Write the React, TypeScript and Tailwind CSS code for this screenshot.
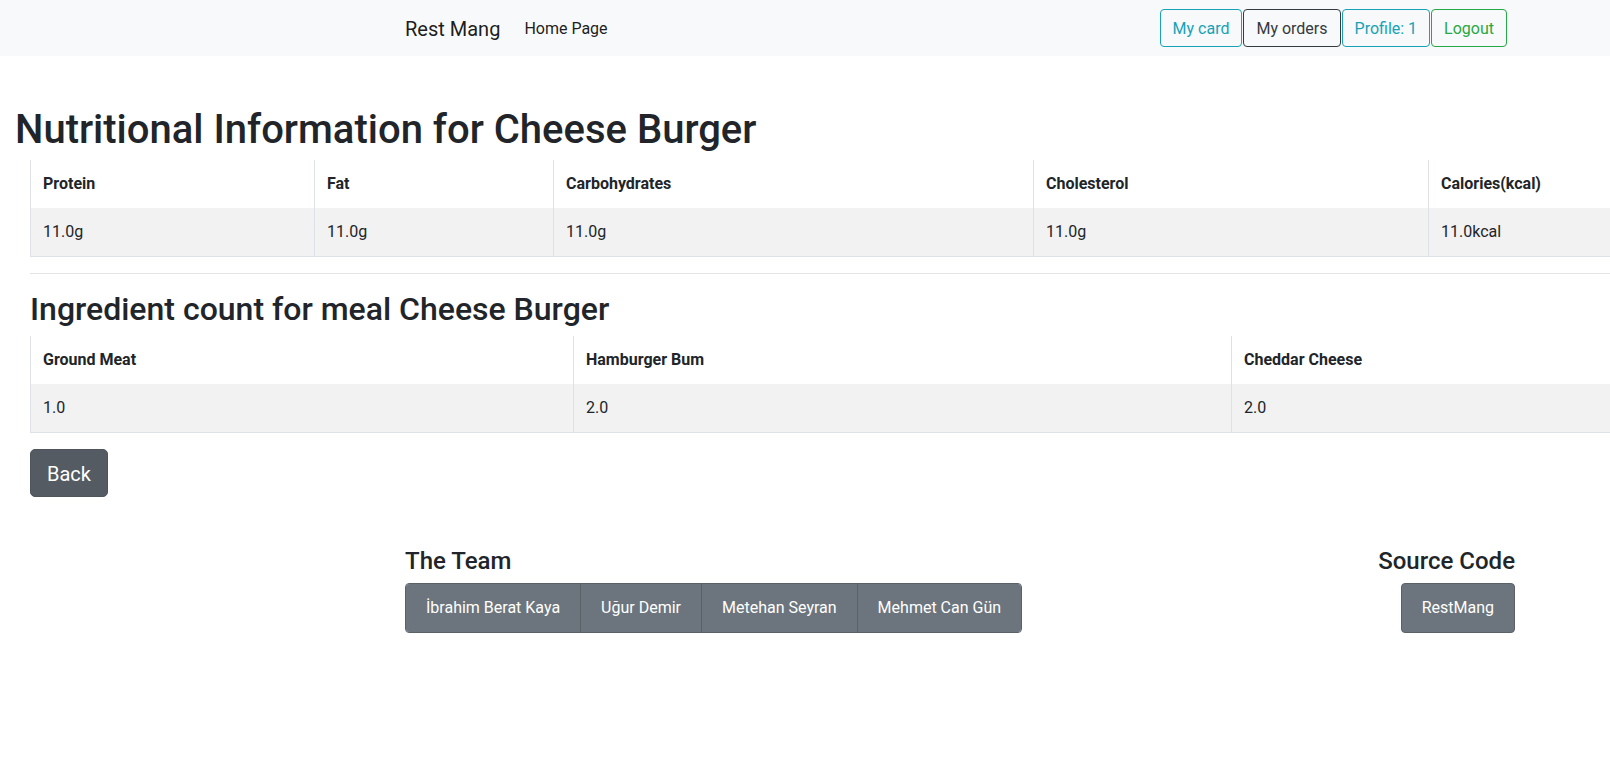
import React from "react";

interface Column {
  name: string;
  value: string;
  width: string;
}

// nutrition table columns
const nutrition: Column[] = [
  { name: "Protein", value: "11.0g", width: "w-[284px]" },
  { name: "Fat", value: "11.0g", width: "w-[239px]" },
  { name: "Carbohydrates", value: "11.0g", width: "w-[480px]" },
  { name: "Cholesterol", value: "11.0g", width: "w-[395px]" },
  { name: "Calories(kcal)", value: "11.0kcal", width: "w-auto" },
];

// ingredient table columns
const ingredients: Column[] = [
  { name: "Ground Meat", value: "1.0", width: "w-[543px]" },
  { name: "Hamburger Bum", value: "2.0", width: "w-[658px]" },
  { name: "Cheddar Cheese", value: "2.0", width: "w-auto" },
];

const team = ["İbrahim Berat Kaya", "Uğur Demir", "Metehan Seyran", "Mehmet Can Gün"];

const DataTable: React.FC<{ columns: Column[] }> = ({ columns }) => {
  return (
    <table className="w-full table-fixed border-collapse border-b border-[#dee2e6] text-[16px] leading-[24px] text-[#212529]">
      <thead>
        <tr>
          {columns.map((col) => (
            <th
              key={col.name}
              className={`${col.width} border-l border-[#dee2e6] p-[12px] text-left font-bold`}
            >
              {col.name}
            </th>
          ))}
        </tr>
      </thead>
      <tbody>
        <tr className="bg-[#f2f2f2]">
          {columns.map((col) => (
            <td key={col.name} className="border-l border-[#dee2e6] p-[12px] text-left">
              {col.value}
            </td>
          ))}
        </tr>
      </tbody>
    </table>
  );
};

export default function App() {
  return (
    <div className="w-full overflow-hidden bg-white font-['Roboto',sans-serif] text-[#212529]">
      <div className="w-[1920px]">
        {/* navbar */}
        <nav className="h-[56px] bg-[#f8f9fa] pt-[9px]">
          <div className="mx-auto flex h-[38px] w-[1140px] items-center justify-between px-[15px]">
            <div className="flex items-center pt-px">
              <span className="mr-[16px] py-[5px] text-[20px] leading-[30px] text-black/90">Rest Mang</span>
              <span className="px-[8px] py-[8px] text-[16px] leading-[24px] text-black/90">Home Page</span>
            </div>
            <div className="flex items-center gap-px pr-[8px]">
              <button className="rounded-[4px] border border-[#17a2b8] px-[12px] pb-[5px] pt-[7px] text-[16px] leading-[24px] text-[#17a2b8]">
                My card
              </button>
              <button className="rounded-[4px] border border-[#343a40] px-[12px] pb-[5px] pt-[7px] text-[16px] leading-[24px] text-[#343a40]">
                My orders
              </button>
              <button className="rounded-[4px] border border-[#17a2b8] px-[12px] pb-[5px] pt-[7px] text-[16px] leading-[24px] text-[#17a2b8]">
                Profile: 1
              </button>
              <button className="rounded-[4px] border border-[#28a745] px-[12px] pb-[5px] pt-[7px] text-[16px] leading-[24px] text-[#28a745]">
                Logout
              </button>
            </div>
          </div>
        </nav>

        {/* main content */}
        <div className="mt-[50px] px-[15px]">
          <h1 className="mb-[6px] text-[40px] font-medium leading-[48px]">
            Nutritional Information for Cheese Burger
          </h1>
          <div className="px-[15px]">
            <DataTable columns={nutrition} />
            <hr className="my-[16px] border-t border-black/10" />
            <h2 className="mb-[8px] text-[32px] font-medium leading-[38px]">
              Ingredient count for meal Cheese Burger
            </h2>
            <DataTable columns={ingredients} />
            <button className="mt-[16px] rounded-[5px] border border-[#4e555b] bg-[#545b62] px-[16px] pb-[7px] pt-[9px] text-[20px] leading-[30px] text-white">
              Back
            </button>
          </div>
        </div>

        {/* footer */}
        <footer className="mx-auto mt-[50px] flex w-[1140px] justify-between px-[15px]">
          <div>
            <h4 className="mb-[7px] text-[24px] font-medium leading-[29px]">The Team</h4>
            <div className="flex overflow-hidden rounded-[4px] border border-[#5a6268]">
              {team.map((name, i) => (
                <button
                  key={name}
                  className={`bg-[#6c757d] px-[20px] py-[12px] text-[16px] leading-[24px] text-white ${
                    i > 0 ? "border-l border-[#5a6268]" : ""
                  }`}
                >
                  {name}
                </button>
              ))}
            </div>
          </div>
          <div className="flex flex-col items-end">
            <h4 className="mb-[7px] text-[24px] font-medium leading-[29px]">Source Code</h4>
            <button className="rounded-[4px] border border-[#5a6268] bg-[#6c757d] px-[20px] py-[12px] text-[16px] leading-[24px] text-white">
              RestMang
            </button>
          </div>
        </footer>
        <div className="h-[128px]" />
      </div>
    </div>
  );
}
